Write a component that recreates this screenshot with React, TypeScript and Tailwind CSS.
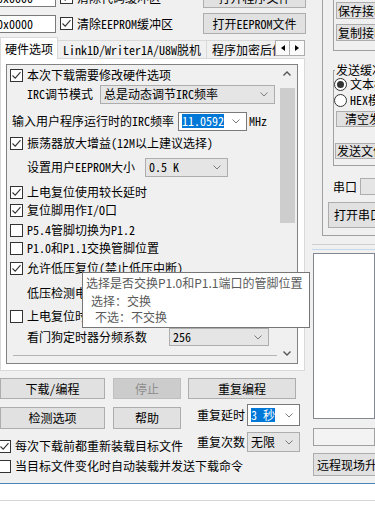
import React from "react";
import clsx from "clsx";

const MONO = "font-['Noto_Sans_Mono_CJK_SC','Noto_Sans_CJK_SC',sans-serif]";
const SANS = "font-['Noto_Sans_CJK_SC',sans-serif]";

const Chevron = ({ up = false, dark = false }: { up?: boolean; dark?: boolean }) => (
  <svg width="8" height="5" viewBox="0 0 8 5" className="shrink-0">
    <polyline
      points={up ? "0.5,4.5 4,1 7.5,4.5" : "0.5,0.5 4,4 7.5,0.5"}
      fill="none"
      stroke={dark ? "#555" : "#7a7a7a"}
      strokeWidth={dark ? 1.4 : 1}
    />
  </svg>
);

const Check = ({ on = false }: { on?: boolean }) => (
  <span className="w-[13px] h-[13px] border border-[#333] bg-white flex items-center justify-center shrink-0">
    {on && (
      <svg width="11" height="11" viewBox="0 0 11 11">
        <polyline points="1.5,5.5 4.2,8.2 9.5,2.2" fill="none" stroke="#333" strokeWidth="1.1" />
      </svg>
    )}
  </span>
);

const Radio = ({ on = false }: { on?: boolean }) => (
  <span className="w-[13px] h-[13px] rounded-full border border-[#333] bg-white flex items-center justify-center shrink-0">
    {on && <span className="w-[7px] h-[7px] rounded-full bg-[#333]" />}
  </span>
);

const CheckRow = ({ on, children, className }: any) => (
  <div className={clsx("flex items-center gap-[4px] whitespace-nowrap", className)}>
    <Check on={on} />
    <span>{children}</span>
  </div>
);

const Btn = ({ children, className, disabled }: any) => (
  <div
    className={clsx(
      "flex items-center justify-center border shrink-0 whitespace-nowrap overflow-hidden",
      disabled ? "bg-[#cccccc] border-[#bfbfbf] text-[#8d8d8d]" : "bg-[#e1e1e1] border-[#adadad]",
      className
    )}
  >
    {children}
  </div>
);

const Combo = ({ children, className, white }: any) => (
  <div
    className={clsx(
      "flex items-center border pl-[3px] pr-[6px] shrink-0",
      white ? "bg-white border-[#7a7a7a]" : "bg-[#e5e5e5] border-[#adadad]",
      className
    )}
  >
    <span className="flex-1 whitespace-nowrap overflow-hidden">{children}</span>
    <Chevron />
  </div>
);

const Sel = ({ children }: any) => <span className="bg-[#0078d7] text-white">{children}</span>;

const Tooltip = () => (
  <div className={`${SANS} absolute left-[82px] top-[272px] w-[228px] h-[56px] bg-white border border-[#767676] text-[#5a5a5a] pt-[3px] flex flex-col`}>
    <div className="pl-[3px] h-[14px] leading-[14px] whitespace-nowrap">选择是否交换P1.0和P1.1端口的管脚位置</div>
    <div className="pl-[8px] mt-[4px] h-[14px] leading-[14px]">选择：交换</div>
    <div className="pl-[12px] mt-[2px] h-[14px] leading-[14px]">不选：不交换</div>
  </div>
);

const HardwarePanel = () => (
  <div className="h-full border border-[#828282] bg-[#f0f0f0] flex">
    <div className="w-[270px] pl-[3px] pt-[1px] flex flex-col">
      <CheckRow on className="h-[18px]">本次下载需要修改硬件选项</CheckRow>
      <div className="h-[20px] flex items-center pl-[17px]">
        <span className="w-[73px]">IRC调节模式</span>
        <Combo className="w-[175px] h-[19px]">总是动态调节IRC频率</Combo>
      </div>
      <div className="mt-[7px] h-[20px] flex items-center pl-[2px]">
        <span className="w-[166px]">输入用户程序运行时的IRC频率</span>
        <Combo white className="w-[69px] h-[19px] pl-[2px]">
          <Sel>11.0592</Sel>
        </Combo>
        <span className="ml-[2px]">MHz</span>
      </div>
      <CheckRow on className="mt-[2px] h-[20px]">振荡器放大增益(12M以上建议选择)</CheckRow>
      <div className="mt-[4px] h-[20px] flex items-center pl-[17px]">
        <span className="w-[118px]">设置用户EEPROM大小</span>
        <Combo className="w-[83px] h-[19px]">0.5 K</Combo>
      </div>
      <CheckRow on className="mt-[6px] h-[18px]">上电复位使用较长延时</CheckRow>
      <CheckRow on className="h-[18px]">复位脚用作I/O口</CheckRow>
      <CheckRow className="mt-[2px] h-[18px]">P5.4管脚切换为P1.2</CheckRow>
      <CheckRow className="h-[18px]">P1.0和P1.1交换管脚位置</CheckRow>
      <CheckRow on className="mt-[2px] h-[18px]">允许低压复位(禁止低压中断)</CheckRow>
      <div className="mt-[6px] h-[20px] flex items-center pl-[17px] whitespace-nowrap">低压检测电压</div>
      <CheckRow className="mt-[4px] h-[18px]">上电复位时由硬件自动启动看门狗</CheckRow>
      <div className="mt-[2px] h-[20px] flex items-center pl-[17px]">
        <span className="w-[142px]">看门狗定时器分频系数</span>
        <Combo className="w-[100px] h-[18px]">256</Combo>
      </div>
      <div className="mt-[8px] ml-[3px] border-t border-[#b4b4b4]" />
    </div>
    <div className="w-[20px] flex flex-col items-center">
      <div className="h-[17px] flex items-center justify-center">
        <Chevron up dark />
      </div>
      <div className="mt-[6px] w-[15px] h-[135px] bg-[#cdcdcd]" />
      <div className="flex-1" />
      <div className="h-[17px] flex items-center justify-center mb-[1px]">
        <Chevron dark />
      </div>
    </div>
  </div>
);

const LeftCol = () => (
  <div className="w-[306px] shrink-0 flex flex-col">
    {[
      ["清除代码缓冲区", "打开程序文件", "mt-0"],
      ["清除EEPROM缓冲区", "打开EEPROM文件", "mt-[5px]"],
    ].map(([chk, btn, mt]) => (
      <div key={chk} className={clsx("flex items-center h-[21px]", mt)}>
        <div className="-ml-[6px] w-[62px] h-[18px] bg-white border border-[#7a7a7a] flex items-center pl-[2px]">
          0x0000
        </div>
        <CheckRow on className="ml-[4px] gap-[3px]">{chk}</CheckRow>
        <Btn className="ml-auto w-[103px] h-[21px]">{btn}</Btn>
      </div>
    ))}

    <div className="mt-[3px] h-[22px] -mb-px flex items-end relative z-10">
      <div className="w-[275px] h-full overflow-hidden flex items-end">
        <div className="h-[22px] w-[58px] shrink-0 bg-white border border-b-0 border-[#d9d9d9] flex items-center justify-center">
          硬件选项
        </div>
        <div className="h-[18px] mb-px shrink-0 px-[5px] bg-[#f0f0f0] border border-b-0 border-l-0 border-[#d9d9d9] flex items-center">
          Link1D/Writer1A/U8W脱机
        </div>
        <div className="h-[18px] mb-px shrink-0 pl-[5px] pr-[20px] bg-[#f0f0f0] border border-b-0 border-l-0 border-[#d9d9d9] flex items-center">
          程序加密后传输
        </div>
      </div>
      <div className="mb-[3px] flex">
        <div className="w-[15px] h-[16px] bg-[#fafafa] border border-[#adadad] flex items-center justify-center">
          <svg width="4" height="6" viewBox="0 0 4 6">
            <polygon points="4,0 0,3 4,6" fill="#000" />
          </svg>
        </div>
        <div className="w-[15px] h-[16px] bg-[#fafafa] border border-l-0 border-[#adadad] flex items-center justify-center">
          <svg width="4" height="6" viewBox="0 0 4 6">
            <polygon points="0,0 4,3 0,6" fill="#000" />
          </svg>
        </div>
      </div>
    </div>

    <div className="w-[305px] h-[313px] bg-white border border-[#d9d9d9] pl-[5px] pr-[6px] pt-[5px] pb-[6px]">
      <HardwarePanel />
    </div>

    <div className="mt-[7px] flex h-[21px]">
      <Btn className="w-[105px] h-full">下载/编程</Btn>
      <Btn disabled className="ml-[8px] w-[68px] h-full">停止</Btn>
      <Btn className="ml-[7px] w-[108px] h-full">重复编程</Btn>
    </div>
    <div className="flex">
      <div className="w-[187px] flex flex-col">
        <div className="mt-[8px] flex h-[22px]">
          <Btn className="w-[105px] h-full">检测选项</Btn>
          <Btn className="ml-[8px] w-[68px] h-full">帮助</Btn>
        </div>
        <CheckRow on className="mt-[8px] h-[18px] -ml-[2px] gap-[2px]">每次下载前都重新装载目标文件</CheckRow>
      </div>
      <div className="ml-[10px] flex flex-col">
        <div className="mt-[5px] h-[22px] flex items-center">
          <span className="w-[48px]">重复延时</span>
          <Combo white className="ml-[2px] w-[53px] h-[22px] pl-[1px]">
            <Sel>3 秒</Sel>
          </Combo>
        </div>
        <div className="mt-[6px] h-[20px] flex items-center">
          <span className="w-[48px]">重复次数</span>
          <Combo className="ml-[2px] w-[53px] h-[20px]">无限</Combo>
        </div>
      </div>
    </div>
    <CheckRow className="mt-[2px] h-[18px] -ml-[2px] gap-[2px]">当目标文件变化时自动装载并发送下载命令</CheckRow>
  </div>
);

const RightCol = () => (
  <div className="flex-1 min-w-0 flex flex-col overflow-hidden">
    <div className="ml-[16px] h-[249px] shrink-0 border-l border-b border-[#a0a0a0] flex flex-col">
      <div className="ml-[10px] h-[64px] border-l border-b border-[#a0a0a0] pl-[2px] pt-[15px] flex flex-col gap-[5px]">
        <Btn className="w-[80px] h-[17px] justify-start pl-[1px]">保存接收数据</Btn>
        <Btn className="w-[80px] h-[17px] justify-start pl-[1px]">复制接收数据</Btn>
      </div>
      <div className="relative ml-[10px] mt-[19px] h-[96px] border-t border-l border-b border-[#a0a0a0] pt-[5px] flex flex-col">
        <span className="absolute -top-[7px] left-[1px] h-[12px] leading-[12px] bg-[#f0f0f0] px-[1px] whitespace-nowrap">发送缓冲区</span>
        <div className="h-[16px] flex items-center gap-[3px] whitespace-nowrap">
          <Radio on />
          <span>文本模式</span>
        </div>
        <div className="h-[16px] flex items-center gap-[3px] whitespace-nowrap">
          <Radio />
          <span>HEX模式</span>
        </div>
        <Btn className="mt-[3px] ml-[2px] w-[80px] h-[16px] justify-start pl-[8px]">清空发送区</Btn>
        <Btn className="mt-[16px] ml-[1px] w-[80px] h-[16px] justify-start pl-[1px]">发送文件</Btn>
      </div>
      <div className="mt-[12px] h-[17px] ml-[10px] flex items-center">
        <span className="w-[27px] shrink-0">串口</span>
        <div className="w-[30px] h-[17px] bg-[#e5e5e5] border border-[#adadad] shrink-0" />
      </div>
      <Btn className="mt-[7px] ml-[5px] w-[60px] h-[26px]">打开串口</Btn>
    </div>
    <div className="ml-[6px] flex flex-col">
      <div className="mt-[8px] h-[6px] border-t border-b border-t-[#cfcfcf] border-b-[#c4daea]" />
      <div className="mt-[3px] ml-[1px] h-[166px] bg-white border border-[#828790]" />
      <div className="mt-[9px] ml-[1px] h-[18px] bg-[#f3f3f3] border border-[#a0a0a0]" />
      <Btn className="mt-[7px] ml-[1px] w-[80px] h-[23px] justify-start pl-[3px]">远程现场升级</Btn>
    </div>
  </div>
);

export default function App() {
  return (
    <div className={`${MONO} relative w-[375px] h-[513px] overflow-hidden bg-[#f0f0f0] text-[12px] leading-[14px] text-black`}>
      <div className="-mt-[13px] flex flex-col">
        <div className="flex h-[496px]">
          <LeftCol />
          <RightCol />
        </div>
        <div className="h-[40px] border-t border-[#4a84b8] bg-white flex flex-col">
          <div className="mt-[16px] border-t border-[#d6d6d6]" />
        </div>
      </div>
      <Tooltip />
    </div>
  );
}
